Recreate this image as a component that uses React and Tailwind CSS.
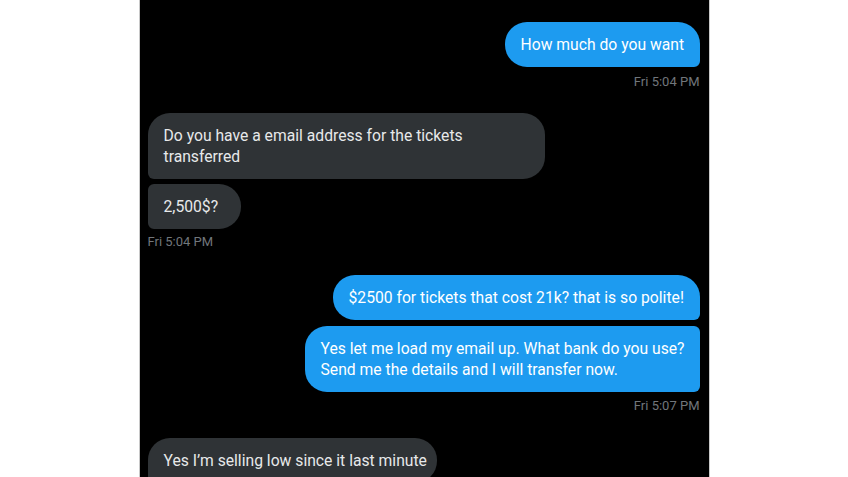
export default function App() {
  const font = { fontFamily: 'Roboto, "Noto Sans", "Liberation Sans", sans-serif' };
  return (
    <div className="w-[848px] h-[477px] bg-white flex justify-center overflow-hidden" style={font}>
      <div className="w-[571px] h-[477px] bg-black overflow-hidden flex flex-col pl-[8px] pr-[9px] pt-[22px] border-x border-[#c8c8c8]">
        <div className="flex flex-col items-end">
          <div className="w-[195px] bg-[#1d9bf0] text-white text-[15.7px] leading-[21px] px-4 py-3 rounded-[22px] rounded-br-[6px] whitespace-nowrap">
            How much do you want
          </div>
          <div className="mt-[7px] text-[13px] leading-[16px] text-[#71767b]">Fri 5:04 PM</div>
        </div>

        <div className="flex flex-col items-start mt-[23px]">
          <div className="w-[397px] bg-[#2f3336] text-[#e7e9ea] text-[15.7px] leading-[21px] px-4 py-3 rounded-[22px] rounded-bl-[6px] whitespace-nowrap">
            Do you have a email address for the tickets
            <br />
            transferred
          </div>
          <div className="w-[93px] mt-[5px] bg-[#2f3336] text-[#e7e9ea] text-[15.7px] leading-[21px] px-4 py-3 rounded-[22px] rounded-tl-[6px] rounded-bl-[6px] whitespace-nowrap">
            2,500$?
          </div>
          <div className="mt-[5px] text-[13px] leading-[16px] text-[#71767b]">Fri 5:04 PM</div>
        </div>

        <div className="flex flex-col items-end mt-[25px]">
          <div className="w-[367px] bg-[#1d9bf0] text-white text-[15.7px] leading-[21px] px-4 py-3 rounded-[22px] rounded-br-[6px] whitespace-nowrap">
            $2500 for tickets that cost 21k? that is so polite!
          </div>
          <div className="w-[395px] mt-[6px] bg-[#1d9bf0] text-white text-[15.7px] leading-[21px] px-4 py-3 rounded-[22px] rounded-tr-[6px] rounded-br-[6px] whitespace-nowrap">
            Yes let me load my email up. What bank do you use?
            <br />
            Send me the details and I will transfer now.
          </div>
          <div className="mt-[6px] text-[13px] leading-[16px] text-[#71767b]">Fri 5:07 PM</div>
        </div>

        <div className="flex flex-col items-start mt-[24px]">
          <div className="w-[289px] bg-[#2f3336] text-[#e7e9ea] text-[15.7px] leading-[21px] px-4 py-3 rounded-[22px] rounded-bl-[6px] whitespace-nowrap">
            Yes I’m selling low since it last minute
          </div>
        </div>
      </div>
    </div>
  );
}
